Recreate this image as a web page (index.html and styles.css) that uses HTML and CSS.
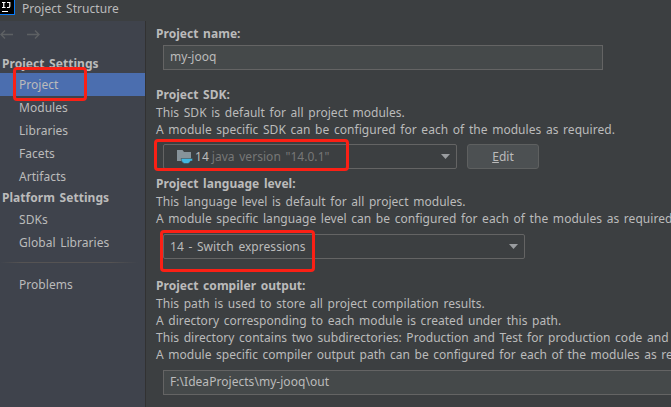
FILE: index.html
```html
<!DOCTYPE html>
<html lang="en">
<head>
<meta charset="utf-8">
<title>Project Structure</title>
<link rel="stylesheet" href="styles.css">
</head>
<body>
<div class="window">
  <header class="titlebar">
    <svg class="logo" width="15" height="15" viewBox="0 0 15 15"><path d="M0 0H15V15H0Z" fill="#087cfa"/><path d="M0 0H14V14H0Z" fill="#000"/><path d="M2 2.5H5.5M3.75 2.5V7.5M2 7.5H5.5M7 2.5H9.8V6.2Q9.8 7.5 8.4 7.5H7M2 11.5H8" fill="none" stroke="#fff" stroke-width="1.2"/></svg>
    <span class="title">Project Structure</span>
  </header>
  <div class="body">
    <nav class="sidebar">
      <div class="history">
        <svg width="40" height="11" viewBox="0 0 40 11" fill="none" stroke="#5d6063" stroke-width="1.4"><path d="M13 5.5H1M5 1.5L1 5.5L5 9.5M27 5.5H39M35 1.5L39 5.5L35 9.5"/></svg>
      </div>
      <h2 class="group">Project Settings</h2>
      <div class="item selected">Project<i class="mark mark-project"></i></div>
      <div class="item">Modules</div>
      <div class="item">Libraries</div>
      <div class="item">Facets</div>
      <div class="item">Artifacts</div>
      <h2 class="group platform">Platform Settings</h2>
      <div class="item">SDKs</div>
      <div class="item">Global Libraries</div>
      <div class="separator"></div>
      <div class="item">Problems</div>
    </nav>
    <main class="content">
      <section class="name">
        <h3>Project name:</h3>
        <div class="field">my-jooq</div>
      </section>
      <section class="sdk">
        <h3>Project SDK:</h3>
        <p>This SDK is default for all project modules.</p>
        <p>A module specific SDK can be configured for each of the modules as required.</p>
        <div class="row">
          <div class="combo combo-sdk">
            <svg class="folder" width="16" height="15" viewBox="0 0 16 15"><path d="M0 1H5.5L7 3H14V12H0Z" fill="#87939a"/><path d="M4 9.5H15.5V12H13.5Q12.5 14.5 10.5 14.5H7.5Q4.3 14 4 9.5Z" fill="#40b6e0" stroke="#3c3f41" stroke-width=".5"/></svg>
            <span>14</span><span class="muted">java version "14.0.1"</span>
            <svg class="arrow" width="9" height="5" viewBox="0 0 9 5"><path d="M0 0H9L4.5 5Z" fill="#9a9da0"/></svg>
            <i class="mark mark-sdk"></i>
          </div>
          <div class="button"><span><u>E</u>dit</span></div>
        </div>
      </section>
      <section class="level">
        <h3>Project language level:</h3>
        <p>This language level is default for all project modules.</p>
        <p>A module specific language level can be configured for each of the modules as required</p>
        <div class="combo combo-level">
          <span>14 - Switch expressions</span>
          <svg class="arrow" width="9" height="5" viewBox="0 0 9 5"><path d="M0 0H9L4.5 5Z" fill="#9a9da0"/></svg>
          <i class="mark mark-level"></i>
        </div>
      </section>
      <section class="output">
        <h3>Project compiler output:</h3>
        <p>This path is used to store all project compilation results.</p>
        <p>A directory corresponding to each module is created under this path.</p>
        <p>This directory contains two subdirectories: Production and Test for production code and</p>
        <p class="tight">A module specific compiler output path can be configured for each of the modules as re</p>
        <div class="field wide">F:\IdeaProjects\my-jooq\out</div>
      </section>
    </main>
  </div>
</div>
</body>
</html>
```
FILE: styles.css
```css
* { box-sizing: border-box; }
body {
  margin: 0;
  overflow: hidden;
  background: #3c3f41;
  color: #bbbbbb;
  font: 12px/17px "Noto Sans", "Open Sans", sans-serif;
  letter-spacing: 0.04px;
  word-spacing: 1.45px;
}
h2, h3, p { margin: 0; font-size: 12px; white-space: nowrap; }
h3 + p { padding-top: 1px; }
.tight { letter-spacing: 0.02px; word-spacing: 1.4px; }
.window { width: 671px; height: 407px; overflow: hidden; display: flex; flex-direction: column; }
.titlebar { height: 21px; display: flex; flex: none; }
.logo { display: block; margin-right: 7px; }
.title { line-height: 17px; }
.body { flex: 1; display: flex; min-height: 0; }
.sidebar { width: 146px; flex: none; background: #3f434c; border-right: 1px solid #323232; }
.history { height: 32px; padding: 8px 0 0; }
.history svg { display: block; }
.group { height: 20px; line-height: 21px; padding-left: 2px; }
.platform { line-height: 20px; }
.item { position: relative; height: 23px; line-height: 24px; padding-left: 19px; white-space: nowrap; }
.selected { background: #4b6eaf; }
.separator { height: 1px; margin: 8px 7px 10px 0; background: linear-gradient(90deg, transparent, #555353 15%, #555353 80%, transparent); }
.content { flex: 1; min-width: 0; padding: 4px 0 0 10px; }
.field {
  width: 440px; height: 25px; margin-left: 7px; padding-left: 6px;
  border: 1px solid #646464; background: #45494a; line-height: 22px; white-space: nowrap;
}
.name .field { margin-top: 3px; }
.sdk { margin-top: 16px; }
.row { display: flex; gap: 10px; margin-top: 6px; }
.combo {
  position: relative; display: flex; align-items: center; margin-left: 7px; padding: 0 6px;
  border: 1px solid #646464; border-radius: 2px; white-space: nowrap;
}
.combo-sdk { width: 294px; height: 25px; padding-left: 13px; }
.folder { margin-right: 2px; }
.muted { margin-left: 3px; color: #777777; }
.arrow { margin-left: auto; }
.button {
  width: 72px; height: 25px; border: 1px solid #5e6060; border-radius: 3px;
  background: #4c5052; line-height: 23px; text-align: center;
}
.level { margin-top: 6px; }
.combo-level { width: 362px; height: 25px; margin-top: 7px; }
.output { margin-top: 18px; }
.output .field { margin-top: 7px; width: 520px; }
.mark { position: absolute; border: 3px solid #fb2015; border-radius: 4px; z-index: 1; }
.mark-project { left: 13px; top: -6px; width: 74px; height: 34px; }
.mark-sdk { left: -10px; top: -6px; width: 195px; height: 32px; }
.mark-level { left: -4px; top: -5px; width: 155px; height: 42px; }
```
